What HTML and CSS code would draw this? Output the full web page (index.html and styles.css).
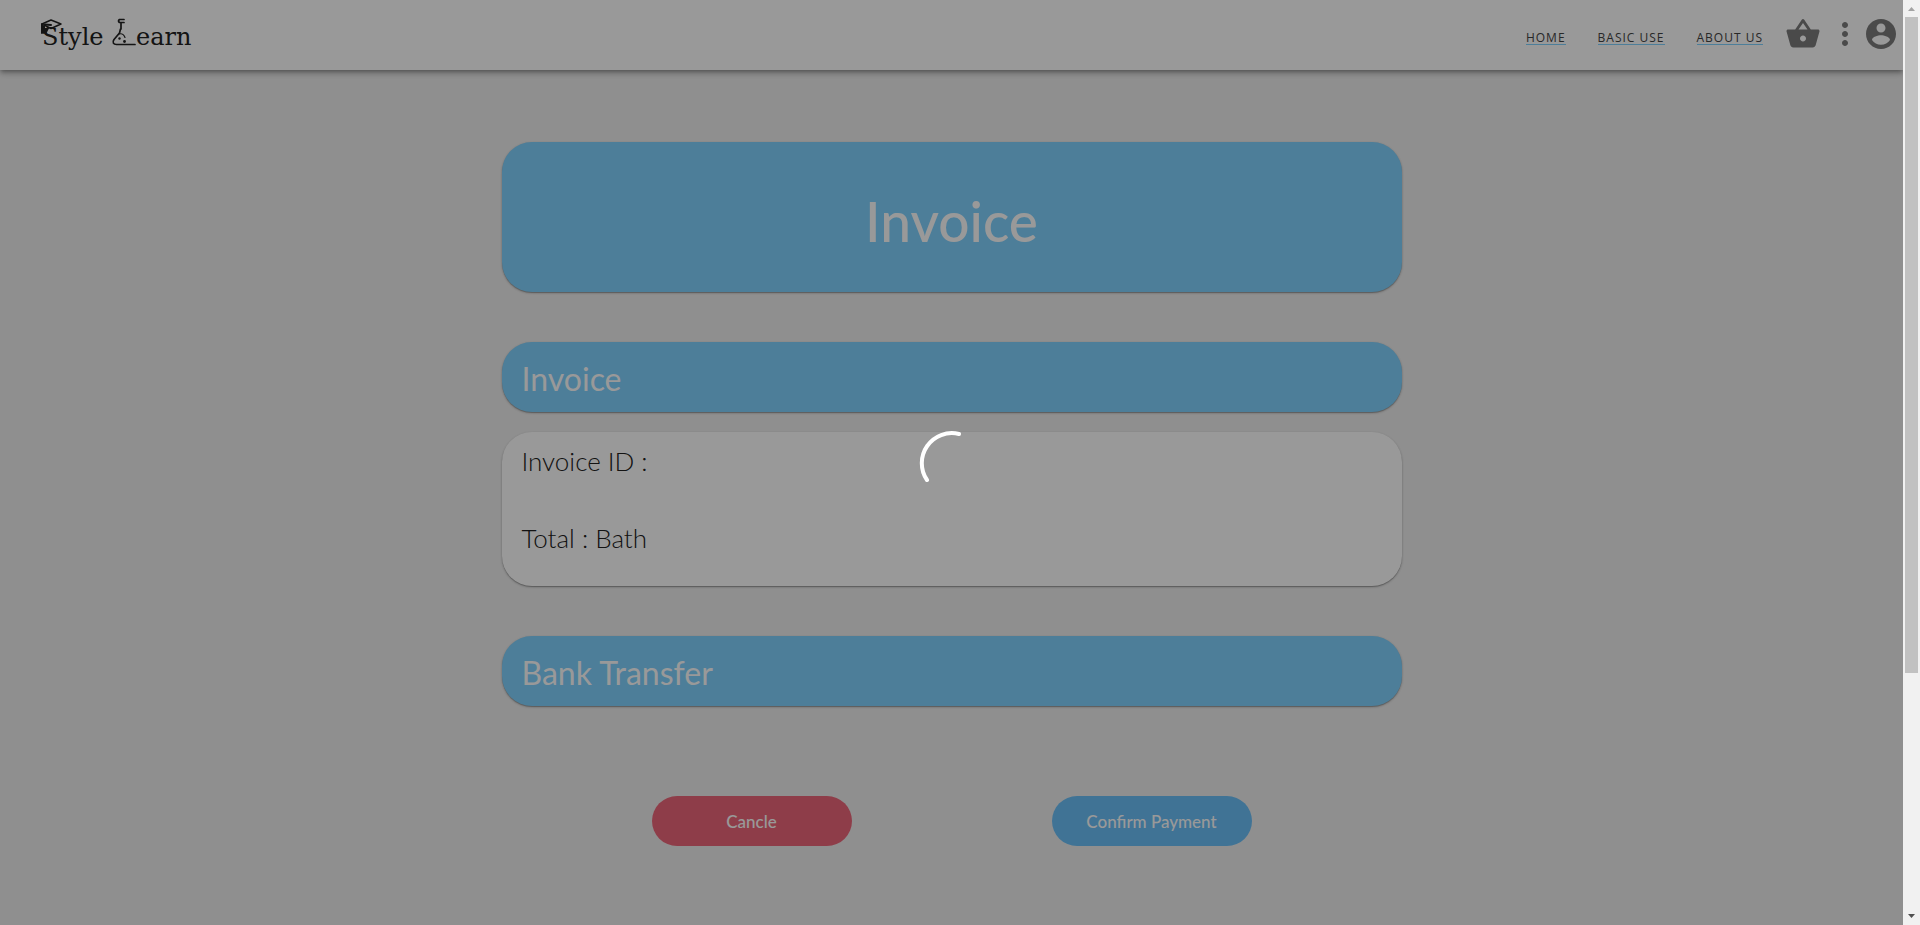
FILE: index.html
```html
<!DOCTYPE html>
<html lang="en">
<head>
<meta charset="utf-8">
<title>Style Learn - Invoice</title>
<link rel="stylesheet" href="styles.css">
</head>
<body>
<div class="shell">
  <div class="page">
    <header class="header">
      <a class="logo" href="#" aria-label="Style Learn">
        <svg width="156" height="44" viewBox="0 0 156 44">
          <g class="logo-text">
            <text x="2" y="33">Style</text>
            <text x="96" y="33">earn</text>
          </g>
          <g fill="none" stroke="#222" stroke-width="1.5" stroke-linecap="round" stroke-linejoin="round">
            <path d="M2 12 11 8l10 4-10 4.500Z"/>
            <path d="M2 12v9M4 14v7M5 12.500l6 .500M2 17h4M2 20h4l2-4" stroke-width="2"/>
            <path d="M84 7.500h-4.500q-2 1.500 0 3H84M81 11v6M80.500 17l-1 4-5.500 6.500c-2 3-.500 5 2.500 5H95" stroke-width="1.700"/>
            <path d="M79 22c4-1 5 1 6 3.500" stroke-width="1.200"/>
          </g>
          <g fill="#222"><circle cx="79.500" cy="26.500" r="1.200"/><circle cx="84.500" cy="29.500" r="1.400"/></g>
        </svg>
      </a>
      <nav class="nav">
        <a class="nav-link" href="#">HOME</a>
        <a class="nav-link" href="#">BASIC USE</a>
        <a class="nav-link" href="#">ABOUT US</a>
      </nav>
      <button class="icon-button cart" aria-label="Basket">
        <svg class="icon" viewBox="0 0 24 24"><path d="M17.210 9l-4.380-6.560c-.190-.280-.510-.420-.830-.420-.320 0-.640.140-.830.430L6.790 9H2c-.550 0-1 .450-1 1 0 .090.010.180.040.270l2.540 9.270c.230.840 1 1.460 1.920 1.460h13c.920 0 1.690-.620 1.930-1.460l2.540-9.270L23 10c0-.550-.450-1-1-1h-4.790zM9 9l3-4.400L15 9H9zm3 8c-1.100 0-2-.900-2-2s.900-2 2-2 2 .900 2 2-.900 2-2 2z"/></svg>
      </button>
      <button class="icon-button" aria-label="More">
        <svg class="icon" viewBox="0 0 24 24"><path d="M12 8c1.100 0 2-.900 2-2s-.900-2-2-2-2 .900-2 2 .900 2 2 2zm0 2c-1.100 0-2 .900-2 2s.900 2 2 2 2-.900 2-2-.900-2-2-2zm0 6c-1.100 0-2 .900-2 2s.900 2 2 2 2-.900 2-2-.900-2-2-2z"/></svg>
      </button>
      <button class="icon-button" aria-label="Account">
        <svg class="icon" viewBox="0 0 24 24"><path d="M12 2C6.480 2 2 6.480 2 12s4.480 10 10 10 10-4.480 10-10S17.520 2 12 2zm0 3c1.660 0 3 1.340 3 3s-1.340 3-3 3-3-1.340-3-3 1.340-3 3-3zm0 14.200c-2.500 0-4.710-1.280-6-3.220.030-1.990 4-3.080 6-3.080 1.990 0 5.970 1.090 6 3.080-1.290 1.940-3.500 3.220-6 3.220z"/></svg>
      </button>
    </header>
    <main class="content">
      <h1 class="card title">Invoice</h1>
      <h2 class="card section">Invoice</h2>
      <div class="card details">
        <p class="detail">Invoice ID :</p>
        <p class="detail">Total : Bath</p>
      </div>
      <h2 class="card section">Bank Transfer</h2>
      <div class="actions">
        <button class="action cancel">Cancle</button>
        <button class="action confirm">Confirm Payment</button>
      </div>
    </main>
    <div class="overlay" role="status" aria-label="Loading">
      <svg width="66" height="66" viewBox="0 0 66 66"><path d="M8 50A30 30 0 0 1 40 4" fill="none" stroke="#fff" stroke-width="4" stroke-linecap="round"/></svg>
    </div>
  </div>
  <div class="scrollbar" aria-hidden="true">
    <svg class="arrow up" viewBox="0 0 17 17"><path d="M5 11h7L8.500 7Z"/></svg>
    <div class="track"><div class="thumb"></div></div>
    <svg class="arrow down" viewBox="0 0 17 17"><path d="M5 6h7L8.500 10Z"/></svg>
  </div>
</div>
</body>
</html>
```
FILE: styles.css
```css
* { box-sizing: border-box; }
body { margin: 0; font-family: Lato, "Open Sans", sans-serif; color: #212121; }
h1, h2, p { margin: 0; }
button { border: 0; padding: 0; font-family: inherit; cursor: pointer; }

.shell { display: grid; grid-template-columns: 1fr 17px; height: 100vh; }
.page { position: relative; overflow: hidden; background: #efefef; }

.header {
  display: flex;
  height: 70px;
  padding: 0 4px 0 40px;
  background: #fff;
  box-shadow: 0 2px 4px -1px rgba(0, 0, 0, .3), 0 4px 5px rgba(0, 0, 0, .14), 0 1px 10px rgba(0, 0, 0, .12);
}
.logo { padding-top: 12px; }
.logo-text { font: 24px "DejaVu Serif", serif; fill: #222; }
.nav { display: flex; align-items: flex-start; gap: 32px; margin-left: auto; padding: 31px 22px 0 0; }
.nav-link {
  border-bottom: 1px solid #80d2ff;
  color: #444;
  font-family: "Open Sans", sans-serif;
  font-size: 12px;
  font-weight: 400;
  line-height: 13px;
  letter-spacing: 1px;
  text-decoration: none;
}
.icon-button { width: 36px; height: 36px; margin-top: 16px; background: none; }
.cart { margin-right: 6px; }
.icon { display: block; width: 36px; height: 36px; fill: #7c7c7c; }

.content { width: 900px; max-width: 100%; margin: 0 auto; padding-top: 72px; }
.card { border-radius: 30px; box-shadow: 0 1px 1px rgba(0, 0, 0, .25), 0 1px 3px rgba(0, 0, 0, .2); }
.title {
  padding-top: 8px;
  background: #80d2ff;
  color: #fff;
  font-size: 55px;
  font-weight: 500;
  line-height: 142px;
  text-align: center;
}
.section {
  margin-top: 50px;
  padding: 4px 20px 0;
  background: #80d2ff;
  color: #fff;
  font-size: 32px;
  font-weight: 400;
  line-height: 66px;
}
.details { margin-top: 20px; padding: 0 20px; background: #fff; }
.detail { padding-bottom: 19px; font-size: 26px; font-weight: 300; line-height: 58px; }
.actions { display: flex; justify-content: center; gap: 200px; margin-top: 90px; }
.action { width: 200px; height: 50px; border-radius: 25px; color: #fff; font-size: 17px; font-weight: 500; }
.cancel { background: #ed677a; }
.confirm { background: #6bc0f9; }

.overlay {
  position: absolute;
  inset: 0;
  display: flex;
  align-items: center;
  justify-content: center;
  background: rgba(0, 0, 0, .4);
}

.scrollbar { display: flex; flex-direction: column; background: #f1f1f1; }
.arrow { width: 17px; height: 17px; }
.up { fill: #a3a3a3; }
.down { fill: #505050; }
.track { flex: 1; padding: 0 2px; }
.thumb { height: 73.600%; background: #c1c1c1; }
```
